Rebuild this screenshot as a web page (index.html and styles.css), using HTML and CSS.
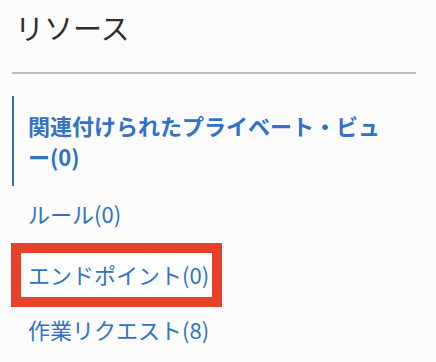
FILE: index.html
```html
<!DOCTYPE html>
<html lang="ja">
<head>
    <meta charset="UTF-8">
    <meta name="viewport" content="width=device-width, initial-scale=1.0">
    <title>リソース</title>
    <link rel="stylesheet" href="styles.css">
</head>
<body>

    <aside class="panel">
        <h2 class="panel-title">リソース</h2>
        <hr class="divider">

        <ul class="res-list">
            <li class="res-item active"><a href="#" class="res-link">関連付けられたプライベート・ビュー(0)</a></li>
            <li class="res-item"><a href="#" class="res-link">ルール(0)</a></li>
            <li class="res-item marked"><a href="#" class="res-link">エンドポイント(0)</a></li>
            <li class="res-item"><a href="#" class="res-link">作業リクエスト(8)</a></li>
        </ul>
    </aside>

</body>
</html>
```

FILE: styles.css
```css
* {
    margin: 0;
    padding: 0;
    box-sizing: border-box;
}

body {
    font-family: "Noto Sans CJK JP", "Noto Sans", sans-serif;
    background-color: #fcfcfc;
    color: #333;
}

.panel {
    padding: 8px 20px 0 12px;
}

.panel-title {
    font-size: 29px;
    font-weight: 400;
    line-height: 38px;
    padding-left: 3px;
    color: #2e2e2e;
}

.divider {
    border: none;
    height: 2px;
    background: #b8bec4;
    margin-top: 26px;
}

.res-list {
    list-style: none;
    margin-top: 22px;
}

.res-item {
    padding: 5.5px 16px 5.5px 9px;
}

.res-link {
    display: inline-block;
    padding: 6.5px 7px;
    font-size: 22px;
    line-height: 31px;
    color: #2f72c8;
    text-decoration: none;
}

.res-item.active {
    border-left: 2px solid #2f6fc4;
    padding: 7.5px 16px 7.5px 7px;
}

.res-item.active .res-link {
    font-weight: 700;
}

.res-item.marked {
    margin-top: 6px;
}

.res-item.marked .res-link {
    padding-right: 3px;
    background: #fff;
    outline: 10px solid #e8412a;
}
```
